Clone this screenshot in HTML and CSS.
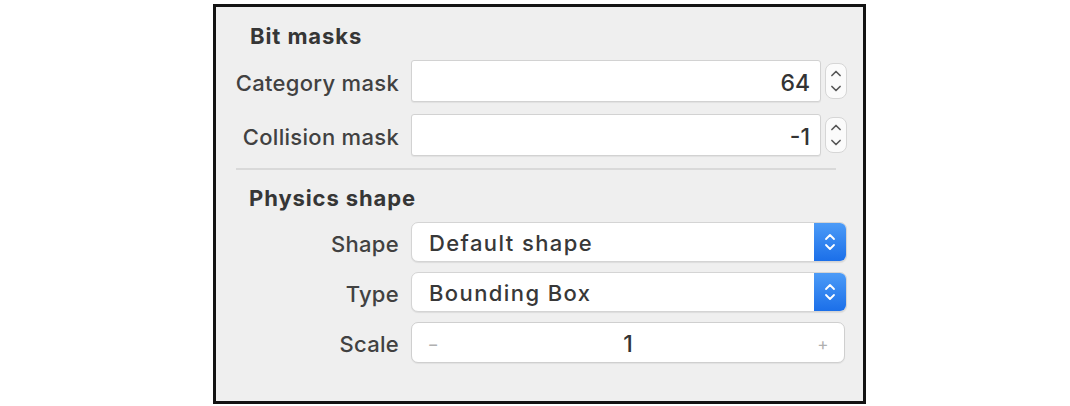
FILE: index.html
```html
<!DOCTYPE html>
<html>
<head>
<meta charset="utf-8">
<link rel="stylesheet" href="styles.css">
</head>
<body>
<div class="panel">
  <div class="heading first">Bit masks</div>
  <div class="row">
    <div class="label">Category mask</div>
    <div class="field-group">
      <div class="input">64</div>
      <div class="stepper">
        <svg width="22" height="36" viewBox="0 0 22 36"><path d="M6.5 12 L11 7.5 L15.5 12" fill="none" stroke="#555" stroke-width="1.8" stroke-linecap="round" stroke-linejoin="round"/><path d="M6.5 24 L11 28.5 L15.5 24" fill="none" stroke="#555" stroke-width="1.8" stroke-linecap="round" stroke-linejoin="round"/></svg>
      </div>
    </div>
  </div>
  <div class="row">
    <div class="label">Collision mask</div>
    <div class="field-group">
      <div class="input">-1</div>
      <div class="stepper">
        <svg width="22" height="36" viewBox="0 0 22 36"><path d="M6.5 12 L11 7.5 L15.5 12" fill="none" stroke="#555" stroke-width="1.8" stroke-linecap="round" stroke-linejoin="round"/><path d="M6.5 24 L11 28.5 L15.5 24" fill="none" stroke="#555" stroke-width="1.8" stroke-linecap="round" stroke-linejoin="round"/></svg>
      </div>
    </div>
  </div>
  <div class="divider"></div>
  <div class="heading second">Physics shape</div>
  <div class="row small">
    <div class="label">Shape</div>
    <div class="popup">
      <span class="popup-text">Default shape</span>
      <span class="popup-arrows"><svg width="14" height="24" viewBox="0 0 14 24"><path d="M3 9 L7 5 L11 9" fill="none" stroke="#fff" stroke-width="1.8" stroke-linecap="round" stroke-linejoin="round"/><path d="M3 15 L7 19 L11 15" fill="none" stroke="#fff" stroke-width="1.8" stroke-linecap="round" stroke-linejoin="round"/></svg></span>
    </div>
  </div>
  <div class="row small">
    <div class="label">Type</div>
    <div class="popup">
      <span class="popup-text">Bounding Box</span>
      <span class="popup-arrows"><svg width="14" height="24" viewBox="0 0 14 24"><path d="M3 9 L7 5 L11 9" fill="none" stroke="#fff" stroke-width="1.8" stroke-linecap="round" stroke-linejoin="round"/><path d="M3 15 L7 19 L11 15" fill="none" stroke="#fff" stroke-width="1.8" stroke-linecap="round" stroke-linejoin="round"/></svg></span>
    </div>
  </div>
  <div class="row scale-row">
    <div class="label">Scale</div>
    <div class="scale">
      <span class="pm">−</span>
      <span class="scale-value">1</span>
      <span class="pm">+</span>
    </div>
  </div>
</div>
</body>
</html>
```

FILE: styles.css
```css
* { box-sizing: border-box; }
html, body { margin: 0; padding: 0; background: #ffffff; }
body {
  font-family: "Inter", "Liberation Sans", sans-serif;
  color: #3a3a3a;
}
.panel {
  margin: 4px 0 0 213px;
  width: 653px;
  height: 400px;
  border: 3px solid #131313;
  background: #efefef;
  padding: 17px 16px 0 0;
}
.heading {
  height: 24px;
  line-height: 24px;
  font-size: 22px;
  font-weight: 700;
  letter-spacing: 0.9px;
  color: #363636;
  padding-left: 34px;
}
.heading.first { margin-bottom: 12px; }
.heading.second { margin-top: 16px; margin-bottom: 12px; padding-left: 33px; }
.row {
  display: grid;
  grid-template-columns: 183px 1fr;
  column-gap: 12px;
  align-items: center;
  height: 42px;
  margin-bottom: 12px;
}
.row.small { height: 40px; margin-bottom: 10px; }
.row.scale-row { height: 41px; }
.label {
  text-align: right;
  font-size: 22px;
  font-weight: 500;
  letter-spacing: 0.3px;
  color: #414141;
  white-space: nowrap;
  padding-top: 3px;
}
.field-group {
  display: flex;
  align-items: center;
  gap: 4px;
  height: 100%;
}
.input {
  flex: 1;
  height: 100%;
  background: #fff;
  border: 1px solid #d2d2d2;
  border-radius: 3px;
  box-shadow: 0 1px 1px rgba(0,0,0,0.06);
  font-size: 23px;
  font-weight: 500;
  color: #333;
  padding: 3px 10px 0 0;
  display: flex;
  align-items: center;
  justify-content: flex-end;
}
.stepper {
  width: 22px;
  height: 36px;
  background: #fbfbfb;
  border: 1px solid #d6d6d6;
  border-radius: 8px;
  display: flex;
  align-items: center;
  justify-content: center;
}
.stepper svg { display: block; }
.divider {
  height: 2px;
  background: #d9d9d9;
  margin: 1px 11px 0 20px;
}
.popup {
  height: 100%;
  display: flex;
  align-items: stretch;
  background: #fff;
  border: 1px solid #d4d4d4;
  border-radius: 7px;
  box-shadow: 0 1px 1px rgba(0,0,0,0.08);
  overflow: hidden;
}
.popup-text {
  flex: 1;
  display: flex;
  align-items: center;
  padding: 2px 0 0 17px;
  font-size: 22px;
  font-weight: 500;
  letter-spacing: 1.4px;
  color: #383838;
}
.popup-arrows {
  width: 32px;
  background: linear-gradient(#4c9bf7, #1b6fe9);
  display: flex;
  align-items: center;
  justify-content: center;
}
.popup-arrows svg { display: block; }
.scale {
  height: 100%;
  margin-right: 2px;
  background: #fff;
  border: 1px solid #cfcfcf;
  border-radius: 7px;
  box-shadow: 0 1px 1px rgba(0,0,0,0.06);
  display: flex;
  align-items: center;
  justify-content: space-between;
  padding: 2px 14px 0 14px;
}
.pm {
  font-size: 17px;
  color: #b0b0b0;
  width: 14px;
  text-align: center;
}
.scale-value {
  font-size: 23px;
  font-weight: 500;
  color: #333;
}
```
